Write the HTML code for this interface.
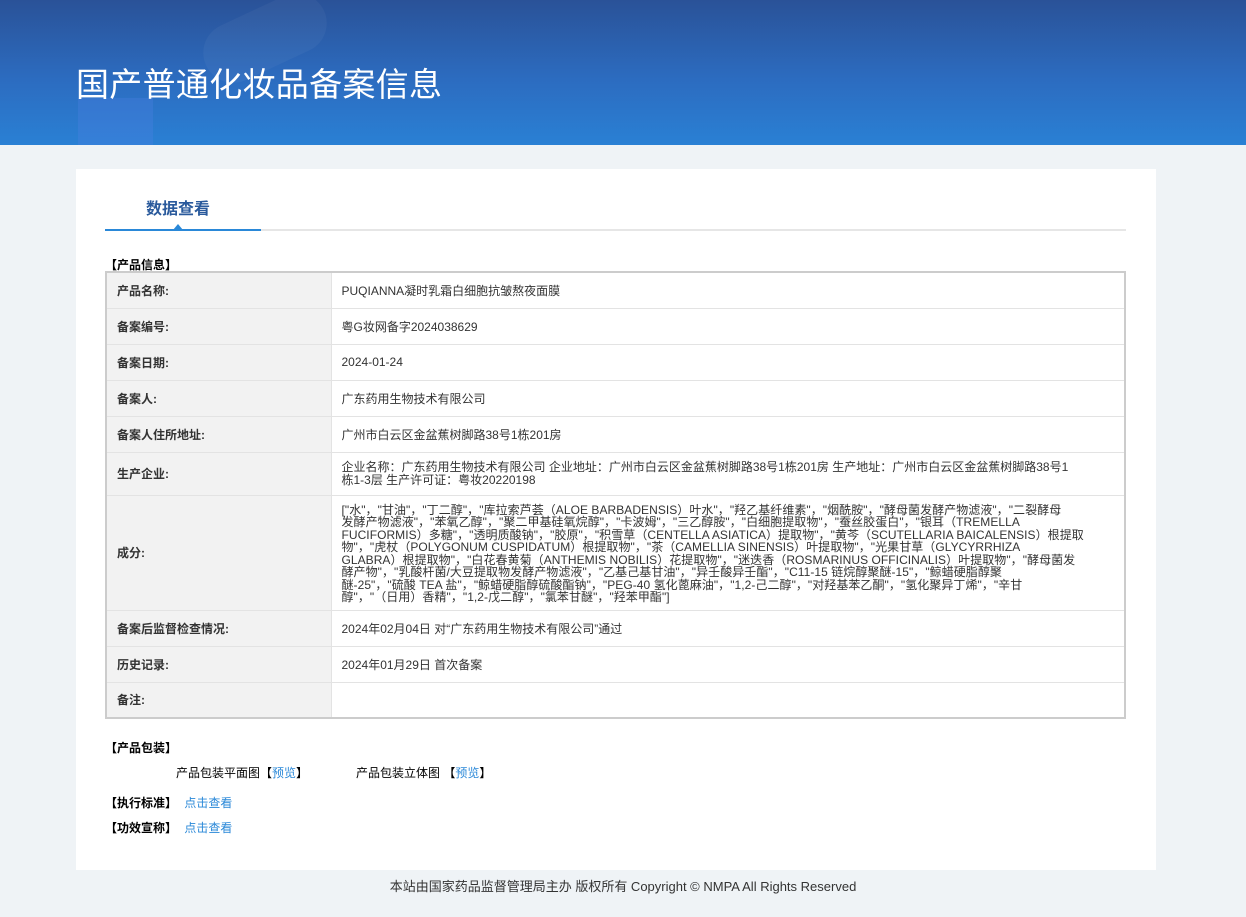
<!DOCTYPE html>
<html><head><meta charset="utf-8"><style>
*{margin:0;padding:0;box-sizing:border-box}
body{width:1246px;height:917px;background:#eff3f6;font-family:"Liberation Sans","Noto Sans CJK SC",sans-serif;color:#333;position:relative;overflow:hidden}
.ban{position:absolute;left:0;top:0;width:1246px;height:145px;background:linear-gradient(180deg,#2a5298 0%,#2c6cc0 55%,#2a80d4 100%);overflow:hidden}
.ban h1{position:absolute;left:76px;top:58px;font-size:33px;font-weight:normal;color:#fff;letter-spacing:0.3px}
.card{position:absolute;left:76px;top:169px;width:1080px;height:701px;background:#fff}
.tab{position:absolute;left:70px;top:26px;font-size:16px;font-weight:bold;color:#2a5a9c}
.line{position:absolute;left:29px;top:60px;width:1021px;height:2px;background:#e6e6e6}
.line i{position:absolute;left:0;top:0;width:156px;height:2px;background:#2a88d8}
.tri{position:absolute;left:97px;top:55px;width:0;height:0;border-left:5px solid transparent;border-right:5px solid transparent;border-bottom:6px solid #2a88d8}
.sec{position:absolute;left:29px;font-size:12px;font-weight:bold;color:#000}
table{position:absolute;left:29px;top:102px;width:1021px;border-collapse:collapse;border:2px solid #ccc;font-size:12px}
td{border:1px solid #e3e3e3;padding:0 10px;vertical-align:middle}
td.l{width:225px;background:#f2f2f2;font-weight:bold;color:#333}
td.v{color:#333}
.ing{line-height:12.5px;font-size:12px;padding:8px 10px 6px;letter-spacing:0.05px}
.t{position:absolute;font-size:12px;color:#000}
a{color:#2a88d8;text-decoration:none}
.foot{position:absolute;top:876px;left:0;width:1246px;text-align:center;font-size:13px;color:#333}
</style></head><body>
<div class="ban">
<div style="position:absolute;left:200px;top:8px;width:130px;height:60px;border-radius:30px;background:rgba(255,255,255,.04);transform:rotate(-25deg)"></div>
<div style="position:absolute;left:78px;top:98px;width:75px;height:50px;background:rgba(80,130,230,.3)"></div>
<h1>国产普通化妆品备案信息</h1></div>
<div class="card">
<div class="tab">数据查看</div>
<div class="line"><i></i></div><div class="tri"></div>
<div class="sec" style="top:87px">【产品信息】</div>
<table>
<tr style="height:36px"><td class="l">产品名称:</td><td class="v">PUQIANNA凝时乳霜白细胞抗皱熬夜面膜</td></tr>
<tr style="height:36px"><td class="l">备案编号:</td><td class="v">粤G妆网备字2024038629</td></tr>
<tr style="height:36px"><td class="l">备案日期:</td><td class="v">2024-01-24</td></tr>
<tr style="height:36px"><td class="l">备案人:</td><td class="v">广东药用生物技术有限公司</td></tr>
<tr style="height:36px"><td class="l">备案人住所地址:</td><td class="v">广州市白云区金盆蕉树脚路38号1栋201房</td></tr>
<tr style="height:43px"><td class="l">生产企业:</td><td class="v" style="line-height:13px">企业名称：广东药用生物技术有限公司 企业地址：广州市白云区金盆蕉树脚路38号1栋201房 生产地址：广州市白云区金盆蕉树脚路38号1<br>栋1-3层 生产许可证：粤妆20220198</td></tr>
<tr style="height:115px"><td class="l">成分:</td><td class="v ing">["水"，"甘油"，"丁二醇"，"库拉索芦荟（ALOE BARBADENSIS）叶水"，"羟乙基纤维素"，"烟酰胺"，"酵母菌发酵产物滤液"，"二裂酵母<br>发酵产物滤液"，"苯氧乙醇"，"聚二甲基硅氧烷醇"，"卡波姆"，"三乙醇胺"，"白细胞提取物"，"蚕丝胶蛋白"，"银耳（TREMELLA<br>FUCIFORMIS）多糖"，"透明质酸钠"，"胶原"，"积雪草（CENTELLA ASIATICA）提取物"，"黄芩（SCUTELLARIA BAICALENSIS）根提取<br>物"，"虎杖（POLYGONUM CUSPIDATUM）根提取物"，"茶（CAMELLIA SINENSIS）叶提取物"，"光果甘草（GLYCYRRHIZA<br>GLABRA）根提取物"，"白花春黄菊（ANTHEMIS NOBILIS）花提取物"，"迷迭香（ROSMARINUS OFFICINALIS）叶提取物"，"酵母菌发<br>酵产物"，"乳酸杆菌/大豆提取物发酵产物滤液"，"乙基己基甘油"，"异壬酸异壬酯"，"C11-15 链烷醇聚醚-15"，"鲸蜡硬脂醇聚<br>醚-25"，"硫酸 TEA 盐"，"鲸蜡硬脂醇硫酸酯钠"，"PEG-40 氢化蓖麻油"，"1,2-己二醇"，"对羟基苯乙酮"，"氢化聚异丁烯"，"辛甘<br>醇"，"（日用）香精"，"1,2-戊二醇"，"氯苯甘醚"，"羟苯甲酯"]</td></tr>
<tr style="height:36px"><td class="l">备案后监督检查情况:</td><td class="v">2024年02月04日 对“广东药用生物技术有限公司”通过</td></tr>
<tr style="height:36px"><td class="l">历史记录:</td><td class="v">2024年01月29日 首次备案</td></tr>
<tr style="height:36px"><td class="l">备注:</td><td class="v"></td></tr>
</table>
<div class="sec" style="top:570px">【产品包装】</div>
<div class="t" style="left:100px;top:595px">产品包装平面图【<a>预览</a>】</div>
<div class="t" style="left:280px;top:595px">产品包装立体图 【<a>预览</a>】</div>
<div class="sec" style="top:625px">【执行标准】 <a style="font-weight:normal;margin-left:4px">点击查看</a></div>
<div class="sec" style="top:650px">【功效宣称】 <a style="font-weight:normal;margin-left:4px">点击查看</a></div>
</div>
<div class="foot">本站由国家药品监督管理局主办 版权所有 Copyright © NMPA All Rights Reserved</div>
</body></html>
